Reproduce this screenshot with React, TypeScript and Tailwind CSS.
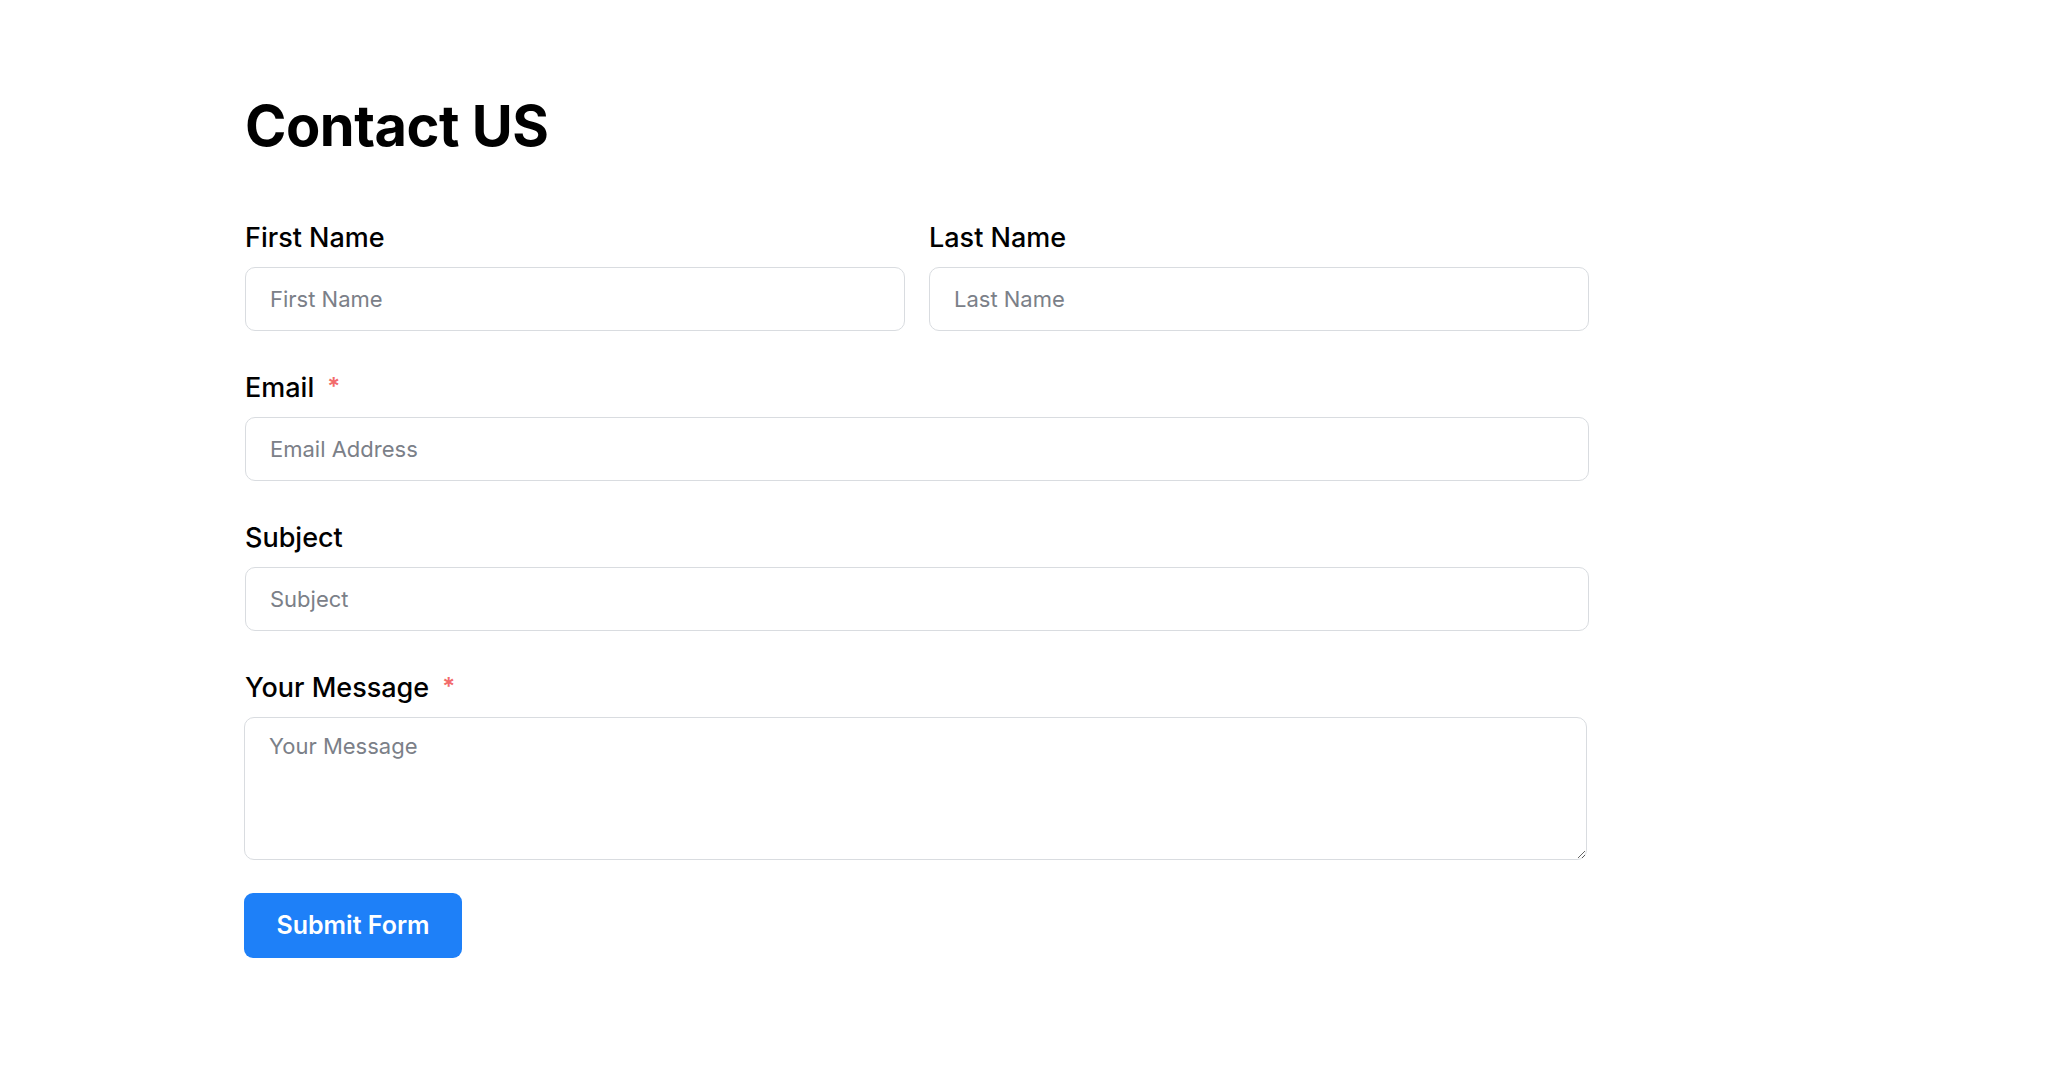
import React from "react";

function Label({ children, required }: { children: React.ReactNode; required?: boolean }) {
  return (
    <label className="flex items-start text-[27px] leading-[32px] font-medium text-black mb-[13px]">
      <span>{children}</span>
      {required && (
        <span className="ml-[13px] mt-[3px] text-[24px] leading-[24px] text-[#f26b6b] font-semibold">*</span>
      )}
    </label>
  );
}

const inputCls =
  "block w-full h-[64px] rounded-[10px] border border-[#d9dce0] bg-white px-[24px] text-[22px] text-[#212529] placeholder:text-[#7b8088] outline-none";

export default function App() {
  return (
    <div className="min-h-screen bg-white pl-[245px] pt-[98px]" style={{ fontFamily: "Inter, 'Noto Sans', sans-serif" }}>
      <div className="w-[1344px]">
        <h1 className="text-[56px] leading-[56px] font-bold text-black tracking-[-0.5px]">Contact US</h1>
        <form className="mt-[68px] flex flex-col gap-[41px]" onSubmit={(e) => e.preventDefault()}>
          <div className="grid grid-cols-2 gap-[24px]">
            <div>
              <Label>First Name</Label>
              <input className={inputCls} placeholder="First Name" />
            </div>
            <div>
              <Label>Last Name</Label>
              <input className={inputCls} placeholder="Last Name" />
            </div>
          </div>
          <div>
            <Label required>Email</Label>
            <input className={inputCls} placeholder="Email Address" />
          </div>
          <div>
            <Label>Subject</Label>
            <input className={inputCls} placeholder="Subject" />
          </div>
          <div>
            <Label required>Your Message</Label>
            <textarea
              className="block w-[1343px] h-[143px] -ml-[1px] rounded-[10px] border border-[#d9dce0] bg-white px-[24px] pt-[12px] text-[22px] leading-[33px] text-[#212529] placeholder:text-[#7b8088] outline-none resize-y"
              placeholder="Your Message"
            />
          </div>
        </form>
        <button
          type="button"
          className="mt-[33px] -ml-[1px] h-[65px] w-[218px] rounded-[9px] bg-[#1e80f8] text-white text-[25px] font-semibold"
        >
          Submit Form
        </button>
      </div>
    </div>
  );
}
